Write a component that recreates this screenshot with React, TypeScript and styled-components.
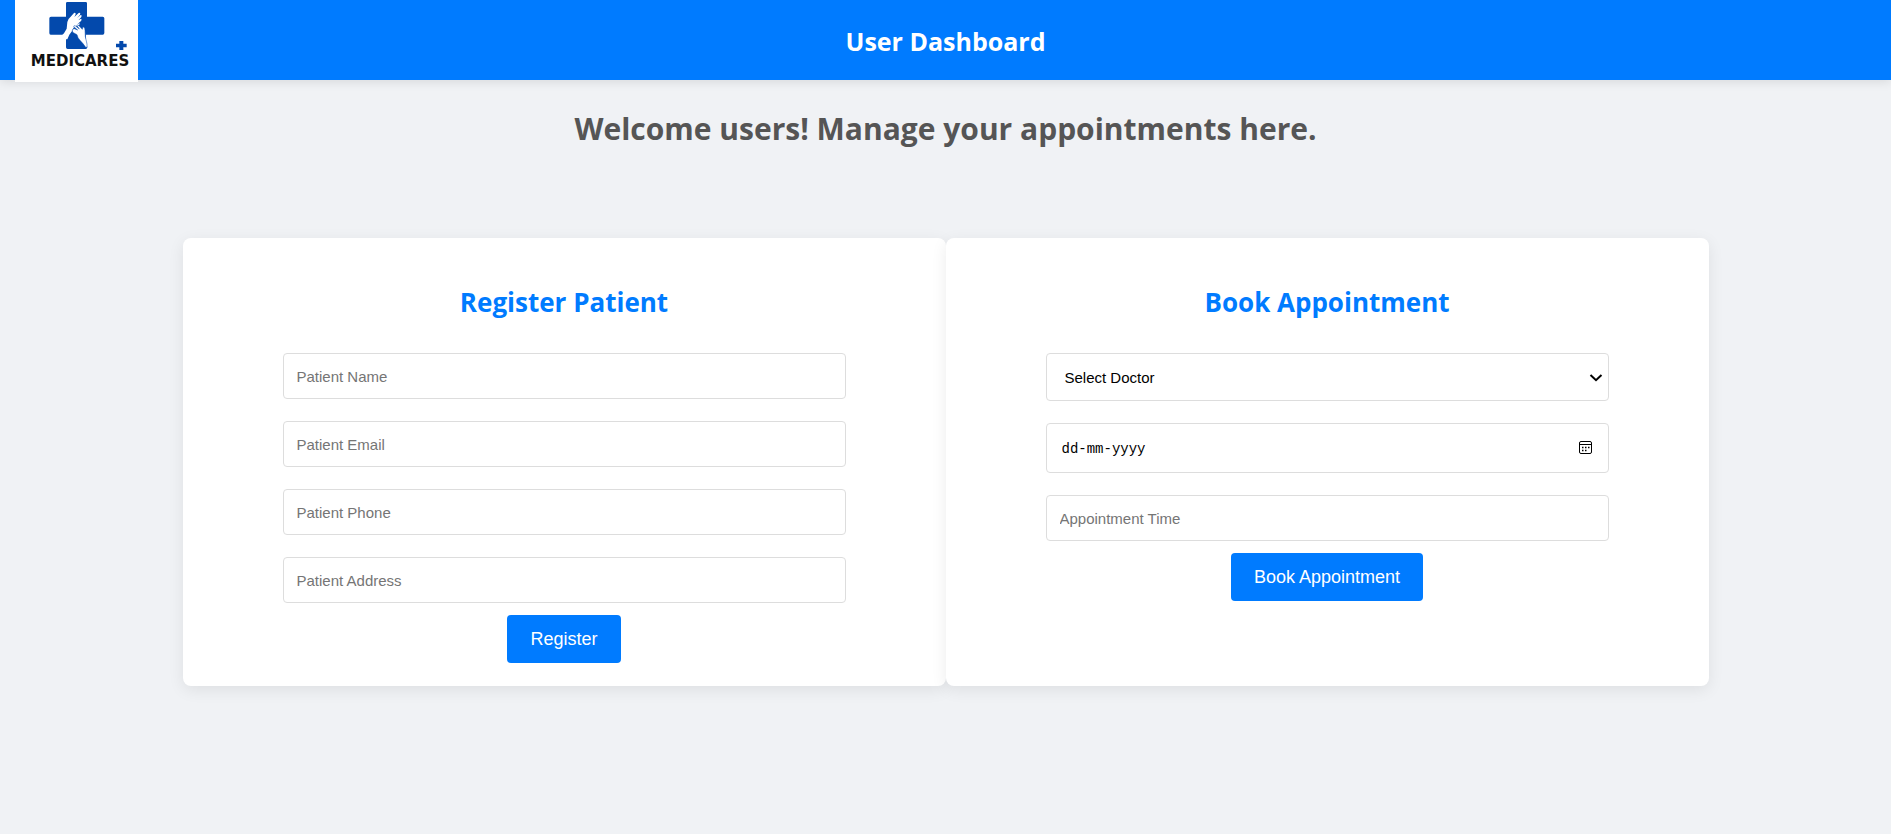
import React from "react";
import styled, { createGlobalStyle } from "styled-components";

const GlobalStyle = createGlobalStyle`
  *, *::before, *::after { box-sizing: border-box; }
  body {
    margin: 0;
    background: #f0f2f5;
    color: #555;
    font-family: "Open Sans", "Noto Sans", sans-serif;
  }
`;

const Header = styled.header`
  display: grid;
  grid-template-columns: 1fr auto 1fr;
  align-items: center;
  height: 80px;
  padding: 0 15px;
  background: #007bff;
  box-shadow: 0 2px 10px rgba(0, 0, 0, 0.1);
`;

const LogoLink = styled.a`
  display: block;
  align-self: start;
  justify-self: start;
  width: 123px;
  height: 82px;
  background: #fff;
  svg { display: block; }
`;

const Title = styled.h1`
  margin: 0;
  color: #fff;
  font-size: 25px;
  line-height: 36px;
  font-weight: 700;
`;

const Main = styled.main`
  display: flex;
  flex-direction: column;
  align-items: center;
  min-height: calc(100vh - 80px);
  padding-bottom: 40px;
`;

const Welcome = styled.h2`
  margin: 27px 0 87px;
  font-size: 30px;
  line-height: 44px;
  font-weight: 700;
  text-align: center;
`;

const Cards = styled.div`
  display: grid;
  grid-template-columns: 1fr 1fr;
  width: 90%;
  max-width: 1526px;
`;

const Card = styled.section`
  padding: 45px 100px 23px;
  background: #fff;
  border-radius: 8px;
  box-shadow: 0 4px 16px rgba(0, 0, 0, 0.08);
`;

const CardTitle = styled.h3`
  margin: 0 0 32px;
  color: #007bff;
  font-size: 26px;
  line-height: 38px;
  font-weight: 700;
  text-align: center;
`;

const Form = styled.form`
  display: flex;
  flex-direction: column;
  align-items: center;
  gap: 12px;
`;

const Fields = styled.div`
  display: flex;
  flex-direction: column;
  gap: 22px;
  width: 100%;
`;

const fieldFont = `font-family: "Liberation Sans", Arial, sans-serif; font-size: 15px;`;

const Input = styled.input`
  ${fieldFont}
  width: 100%;
  height: 46px;
  padding: 0 13px;
  border: 1px solid #ddd;
  border-radius: 4px;
  background: #fff;
  &::placeholder { color: #757575; }
`;

const Control = styled.div`
  position: relative;
  display: flex;
`;

const Select = styled.select`
  ${fieldFont}
  appearance: none;
  width: 100%;
  height: 48px;
  padding: 0 30px 0 18px;
  border: 1px solid #ddd;
  border-radius: 4px;
  background: #fff;
  color: #000;
`;

const DateInput = styled(Input)`
  height: 50px;
  padding: 2px 40px 0 15px;
  font-family: "Liberation Mono", monospace;
  font-size: 14px;
  &::placeholder { color: #000; }
`;

const Chevron = styled.svg`
  position: absolute;
  right: 6px;
  top: 20px;
  pointer-events: none;
`;

const PickerButton = styled.button`
  position: absolute;
  right: 16px;
  top: 17px;
  width: 15px;
  height: 15px;
  padding: 0;
  border: 0;
  background: none;
  svg { display: block; }
`;

const Submit = styled.button`
  height: 48px;
  padding: 0 23px;
  border: 0;
  border-radius: 4px;
  background: #007bff;
  color: #fff;
  font-family: "Liberation Sans", Arial, sans-serif;
  font-size: 18px;
  cursor: pointer;
`;

const Logo = () => (
  <svg width="123" height="82" viewBox="45 0 369 246" aria-hidden="true">
    <path
      fill="#0349ac"
      d="M202 6H257Q261 6 261 10V50H308Q313 50 313 55V99Q313 104 308 104H258V125L262 142Q262 147 257 147H203Q198 147 198 142V104H152Q148 104 148 99V55Q148 50 153 50H198V10Q198 6 202 6Z"
    />
    <path
      fill="#fff"
      d="M186 106 192 100 200 86 202 66Q204 56 212 50L222 39Q228 37 227 43L223 51 236 39Q243 37 240 44L231 55 242 45Q247 45 244 51L235 61 243 56Q247 58 243 63L233 72 240 70Q240 75 232 77L222 81Q218 92 208 104L202 118H186Z"
    />
    <path
      fill="#fff"
      stroke="#0349ac"
      strokeWidth="1.500"
      d="M217 91Q217 86 223 86L233 90 221 80Q221 75 227 78L238 87 230 76Q233 73 237 77L247 88Q248 79 251 81Q255 83 255 91L256 110 261 132V142H257Q250 131 240 121Q233 114 231 104L218 97Z"
    />
    <path fill="#0349ac" d="M358 123H370V131H380V142H370V150H358V142H348V131H358Z" />
    <text x="240" y="198" textAnchor="middle" fill="#111" fontFamily="DejaVu Sans, sans-serif" fontSize="45" fontWeight="700">
      MEDICARES
    </text>
  </svg>
);

const patientFields = [
  { label: "Patient Name", type: "text" },
  { label: "Patient Email", type: "email" },
  { label: "Patient Phone", type: "tel" },
  { label: "Patient Address", type: "text" },
];

export default function App() {
  const stop = (e: React.FormEvent) => e.preventDefault();
  return (
    <>
      <GlobalStyle />
      <Header>
        <LogoLink href="#" aria-label="Medicares home">
          <Logo />
        </LogoLink>
        <Title>User Dashboard</Title>
      </Header>
      <Main>
        <Welcome>Welcome users! Manage your appointments here.</Welcome>
        <Cards>
          <Card>
            <CardTitle>Register Patient</CardTitle>
            <Form onSubmit={stop}>
              <Fields>
                {patientFields.map((f) => (
                  <Input key={f.label} type={f.type} placeholder={f.label} aria-label={f.label} />
                ))}
              </Fields>
              <Submit type="submit">Register</Submit>
            </Form>
          </Card>
          <Card>
            <CardTitle>Book Appointment</CardTitle>
            <Form onSubmit={stop}>
              <Fields>
                <Control>
                  <Select aria-label="Doctor" defaultValue="">
                    <option value="">Select Doctor</option>
                  </Select>
                  <Chevron width="14" height="10" viewBox="0 0 14 10" aria-hidden="true">
                    <path d="M1.500 2 7 7.200 12.500 2" fill="none" stroke="#000" strokeWidth="2" />
                  </Chevron>
                </Control>
                <Control>
                  <DateInput type="text" placeholder="dd-mm-yyyy" aria-label="Appointment date" />
                  <PickerButton type="button" aria-label="Open calendar">
                    <svg width="15" height="15" viewBox="0 0 15 15">
                      <rect x="1.500" y="1.500" width="12" height="12" rx="1.500" fill="none" stroke="#000" />
                      <path d="M1.500 4.500h12" stroke="#000" />
                      <path d="M4 7.500h1.500m1.500 0h1.500m1.500 0h1.500M4 10.500h1.500m1.500 0h1.500" stroke="#000" strokeWidth="1.500" />
                    </svg>
                  </PickerButton>
                </Control>
                <Input type="text" placeholder="Appointment Time" aria-label="Appointment Time" />
              </Fields>
              <Submit type="submit">Book Appointment</Submit>
            </Form>
          </Card>
        </Cards>
      </Main>
    </>
  );
}
